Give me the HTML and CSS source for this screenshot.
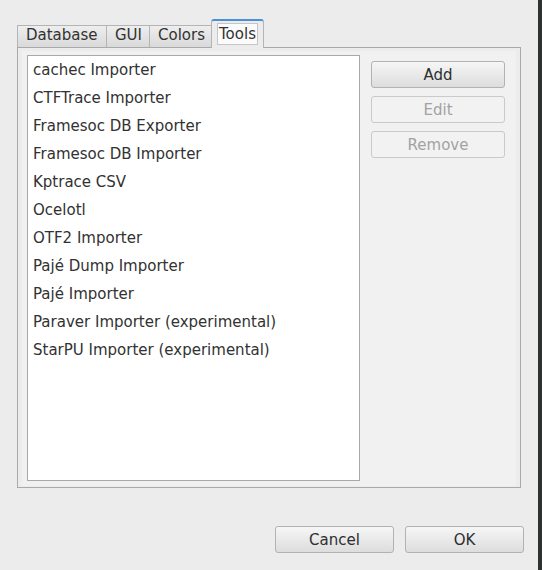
FILE: index.html
```html
<!DOCTYPE html>
<html>
<head>
<meta charset="utf-8">
<link rel="stylesheet" href="styles.css">
</head>
<body>
<div class="window">
  <div class="main">
    <div class="tabs">
      <div class="tab">Database</div>
      <div class="tab">GUI</div>
      <div class="tab">Colors</div>
      <div class="tab active"><span class="focus">Tools</span></div>
    </div>
    <div class="panel">
      <div class="page">
        <ul class="list">
          <li>cachec Importer</li>
          <li>CTFTrace Importer</li>
          <li>Framesoc DB Exporter</li>
          <li>Framesoc DB Importer</li>
          <li>Kptrace CSV</li>
          <li>Ocelotl</li>
          <li>OTF2 Importer</li>
          <li>Pajé Dump Importer</li>
          <li>Pajé Importer</li>
          <li>Paraver Importer (experimental)</li>
          <li>StarPU Importer (experimental)</li>
        </ul>
        <div class="side">
          <button class="btn">Add</button>
          <button class="btn" disabled>Edit</button>
          <button class="btn" disabled>Remove</button>
        </div>
      </div>
    </div>
    <div class="footer">
      <button class="btn wide">Cancel</button>
      <button class="btn wide">OK</button>
    </div>
  </div>
  <div class="edge"></div>
</div>
</body>
</html>
```

FILE: styles.css
```css
html, body {
  margin: 0;
  padding: 0;
}
body {
  width: 542px;
  height: 570px;
  background: #ececec;
  font-family: "DejaVu Sans", sans-serif;
  font-size: 15px;
  color: #323232;
  overflow: hidden;
}
.window {
  display: flex;
  height: 570px;
}
.main {
  width: 538px;
  display: flex;
  flex-direction: column;
}
.edge {
  width: 4px;
  background: #2f3130;
}
.tabs {
  display: flex;
  align-items: flex-end;
  margin: 19px 0 0 17px;
  height: 28px;
}
.tab {
  box-sizing: border-box;
  height: 22px;
  padding: 0 0 3px 8px;
  border: 1px solid #b4b4b4;
  border-bottom: none;
  border-right: none;
  background: linear-gradient(#eeeeee, #d9d9d9);
  display: flex;
  align-items: center;
  line-height: 18px;
}
.tab:nth-child(1) { width: 89px; }
.tab:nth-child(2) { width: 43px; }
.tab:nth-child(3) { width: 62px; }
.tab.active {
  width: 53px;
  border: 1px solid #b4b4b4;
  border-top: 2px solid #4a90d9;
  border-bottom: none;
  border-radius: 3px 3px 0 0;
  background: #ececec;
  padding: 0 5px 0 5px;
  margin-bottom: -1px;
  height: 29px;
  align-items: flex-start;
  position: relative;
  z-index: 1;
}
.focus {
  display: block;
  border: 1px solid #c6c6c6;
  background: #fbfbfb;
  padding: 0 1px;
  line-height: 20px;
  margin-top: 2px;
}
.panel {
  box-sizing: border-box;
  margin-left: 17px;
  width: 504px;
  height: 441px;
  border: 1px solid #a9a9a9;
  padding: 3px 4px 1px 4px;
  display: flex;
}
.page {
  flex: 1;
  background: #f1f1f1;
  display: flex;
  gap: 11px;
  padding: 4px 11px 4px 5px;
}
.list {
  box-sizing: border-box;
  list-style: none;
  margin: 0;
  padding: 0;
  width: 333px;
  height: 426px;
  background: #ffffff;
  border: 1px solid #a8a8a8;
}
.list li {
  height: 28px;
  line-height: 28px;
  padding-left: 5px;
  white-space: nowrap;
}
.side {
  display: flex;
  flex-direction: column;
  gap: 8px;
  padding-top: 6px;
}
.btn {
  box-sizing: border-box;
  width: 134px;
  height: 27px;
  border: 1px solid #b2b2b2;
  border-radius: 3px;
  background: linear-gradient(#f6f6f6, #dddddd);
  font-family: "DejaVu Sans", sans-serif;
  font-size: 15px;
  color: #2e2e2e;
  padding: 0;
}
.btn:disabled {
  background: #f2f2f2;
  border-color: #cacaca;
  color: #a2a2a2;
}
.footer {
  display: flex;
  justify-content: flex-end;
  gap: 11px;
  margin-top: 38px;
  padding-right: 14px;
}
.btn.wide {
  width: 119px;
}
```
